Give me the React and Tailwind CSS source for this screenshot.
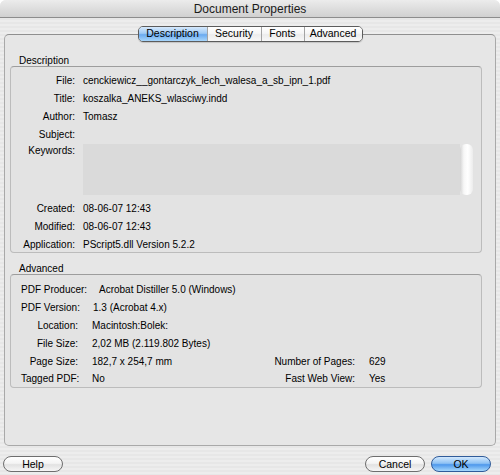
import React from 'react';

// Sekcja "Description" – etykiety wyrównane do prawej
const opis = [
  { label: 'File:', value: 'cenckiewicz__gontarczyk_lech_walesa_a_sb_ipn_1.pdf' },
  { label: 'Title:', value: 'koszalka_ANEKS_wlasciwy.indd' },
  { label: 'Author:', value: 'Tomasz' },
  { label: 'Subject:', value: '' },
];

const daty = [
  { label: 'Created:', value: '08-06-07 12:43' },
  { label: 'Modified:', value: '08-06-07 12:43' },
  { label: 'Application:', value: 'PScript5.dll Version 5.2.2' },
];

function DescRow({ label, value }) {
  return (
    <div className="flex h-[18px] items-center pt-[2px]">
      <div className="w-[64px] text-right whitespace-nowrap">{label}</div>
      <div className="ml-[8px] whitespace-nowrap">{value}</div>
    </div>
  );
}

function AdvRow({ label, value, left }) {
  return (
    <div className="flex h-[18px] items-center pt-[2px]">
      <div className={left ? `${left} whitespace-nowrap` : 'w-[57px] text-right whitespace-nowrap mr-[14px]'}>{label}</div>
      <div className="whitespace-nowrap">{value}</div>
    </div>
  );
}

function Tab({ children, active, first, width }) {
  return (
    <div
      className={
        'flex items-center justify-center h-full ' +
        width +
        (first ? '' : ' border-l border-[#a3a3a3]') +
        (active
          ? ' bg-[linear-gradient(180deg,#d6e9fc_0%,#9fcaf5_45%,#6aaaf0_55%,#a8d6fb_100%)]'
          : ' bg-[linear-gradient(180deg,#ffffff_0%,#f6f6f6_45%,#ececec_55%,#f8f8f8_100%)]')
      }
    >
      {children}
    </div>
  );
}

export default function App() {
  return (
    <div className="w-[500px] h-[475px] overflow-hidden bg-white font-['Liberation_Sans',Arial,sans-serif] text-[10px] text-black">
      <div className="h-full rounded-t-[6px] overflow-hidden bg-[repeating-linear-gradient(180deg,#ededed_0px,#ededed_2px,#e7e7e7_2px,#e7e7e7_4px)]">
        {/* pasek tytułu */}
        <div className="h-[18px] flex items-center justify-center border-b border-[#8c8c8c] bg-[linear-gradient(180deg,#ececec,#d0d0d0)] text-[12px] text-[#1a1a1a]">
          Document Properties
        </div>

        {/* zakładki */}
        <div className="relative z-10 mt-[8px] flex justify-center">
          <div className="flex h-[16px] rounded-[5px] border border-[#5c5c5c] overflow-hidden text-[10.5px] shadow-[0_1px_1px_rgba(0,0,0,0.15)]">
            <Tab active first width="w-[68px]">Description</Tab>
            <Tab width="w-[54px]">Security</Tab>
            <Tab width="w-[43px]">Fonts</Tab>
            <Tab width="w-[58px]">Advanced</Tab>
          </div>
        </div>

        {/* panel */}
        <div className="-mt-[8px] mx-[4px] h-[412px] rounded-[5px] border border-[#a9a9a9] border-t-[#8f8f8f] bg-[#e6e6e6] pl-[5px] pr-[13px]">
          <div className="pt-[20px] h-[31px] leading-[11px] pl-[9px]">Description</div>
          <div className="rounded-[4px] border border-[#bcbcbc] border-t-[#9d9d9d] bg-[#e3e3e3] pt-[3px] h-[187px]">
            {opis.map((r) => (
              <DescRow key={r.label} {...r} />
            ))}
            <div className="flex mt-[2px]">
              <div className="w-[64px] text-right leading-[14px]">Keywords:</div>
              <div className="ml-[8px] flex w-[390px] h-[51px]">
                <div className="flex-1 bg-[#dadada]" />
                <div className="w-[13px] rounded-[6px] bg-[linear-gradient(90deg,#d4d4d4_0%,#f7f7f7_30%,#ffffff_60%,#ececec_100%)]" />
              </div>
            </div>
            <div className="mt-[3px]">
              {daty.map((r) => (
                <DescRow key={r.label} {...r} />
              ))}
            </div>
          </div>

          <div className="mt-[9px] h-[12px] pt-[1px] leading-[11px] pl-[9px]">Advanced</div>
          <div className="rounded-[4px] border border-[#bcbcbc] border-t-[#9d9d9d] bg-[#e3e3e3] pt-[4px] pl-[10px] h-[114px]">
            <AdvRow label="PDF Producer:" value="Acrobat Distiller 5.0 (Windows)" left="w-[78px]" />
            <AdvRow label="PDF Version:" value="1.3 (Acrobat 4.x)" left="w-[72px]" />
            <AdvRow label="Location:" value="Macintosh:Bolek:" />
            <AdvRow label="File Size:" value="2,02 MB (2.119.802 Bytes)" />
            <div className="flex h-[18px] items-center pt-[2px]">
              <div className="w-[57px] text-right mr-[14px] whitespace-nowrap">Page Size:</div>
              <div className="w-[143px] whitespace-nowrap">182,7 x 254,7 mm</div>
              <div className="w-[120px] text-right whitespace-nowrap">Number of Pages:</div>
              <div className="ml-[14px]">629</div>
            </div>
            <div className="flex h-[18px] items-center pt-[1px]">
              <div className="w-[57px] text-right mr-[14px] whitespace-nowrap">Tagged PDF:</div>
              <div className="w-[143px] whitespace-nowrap">No</div>
              <div className="w-[120px] text-right whitespace-nowrap">Fast Web View:</div>
              <div className="ml-[14px]">Yes</div>
            </div>
          </div>
        </div>

        {/* przyciski */}
        <div className="mt-[10px] flex items-center px-[3px] pr-[9px] text-[10.5px]">
          <button className="w-[60px] h-[16px] rounded-full border border-[#6e6e6e] bg-[linear-gradient(180deg,#ffffff_0%,#f4f4f4_45%,#e2e2e2_55%,#f6f6f6_100%)] leading-[14px]">
            Help
          </button>
          <div className="flex-1" />
          <button className="w-[60px] h-[16px] rounded-full border border-[#6e6e6e] bg-[linear-gradient(180deg,#ffffff_0%,#f4f4f4_45%,#e2e2e2_55%,#f6f6f6_100%)] leading-[14px]">
            Cancel
          </button>
          <button className="ml-[6px] w-[60px] h-[16px] rounded-full border border-[#2f5b9a] bg-[linear-gradient(180deg,#d3e8fd_0%,#8ec2f4_45%,#4e98ec_55%,#a6d8fc_100%)] leading-[14px]">
            OK
          </button>
        </div>
      </div>
    </div>
  );
}
